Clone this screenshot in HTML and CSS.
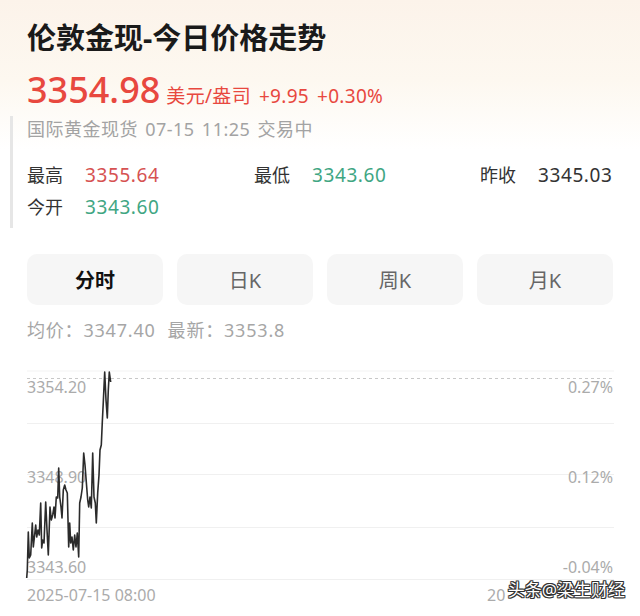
FILE: index.html
```html
<!DOCTYPE html>
<html lang="zh-CN">
<head>
    <meta charset="UTF-8">
    <meta name="viewport" content="width=device-width, initial-scale=1.0">
    <title>伦敦金现-今日价格走势</title>
    <link rel="stylesheet" href="styles.css">
</head>
<body>
    <div class="header">
        <h1 class="title">伦敦金现-今日价格走势</h1>
        <div class="price-row">
            <span class="price">3354.98</span>
            <span class="unit">美元/盎司</span>
            <span class="change">+9.95</span>
            <span class="change">+0.30%</span>
        </div>
    </div>

    <div class="info">
        <div class="subtitle">国际黄金现货 07-15 11:25 交易中</div>
        <div class="stats">
            <div class="stat"><span class="label">最高</span><span class="value up">3355.64</span></div>
            <div class="stat"><span class="label">最低</span><span class="value down">3343.60</span></div>
            <div class="stat"><span class="label">昨收</span><span class="value">3345.03</span></div>
            <div class="stat"><span class="label">今开</span><span class="value down">3343.60</span></div>
        </div>
    </div>

    <div class="tabs">
        <button class="tab active">分时</button>
        <button class="tab">日K</button>
        <button class="tab">周K</button>
        <button class="tab">月K</button>
    </div>

    <div class="summary">
        <span>均价：3347.40</span>
        <span>最新：3353.8</span>
    </div>

    <div class="chart">
        <svg width="640" height="256" viewBox="0 360 640 256">
            <!-- grid -->
            <line x1="27" y1="371" x2="614" y2="371" stroke="#f3f3f3" stroke-width="1"/>
            <line x1="27" y1="378.5" x2="614" y2="378.5" stroke="#c8c8c8" stroke-width="1" stroke-dasharray="3 3"/>
            <line x1="27" y1="423.5" x2="614" y2="423.5" stroke="#f0f0f0" stroke-width="1"/>
            <line x1="27" y1="474.5" x2="614" y2="474.5" stroke="#f0f0f0" stroke-width="1"/>
            <line x1="27" y1="527.5" x2="614" y2="527.5" stroke="#f0f0f0" stroke-width="1"/>
            <line x1="27" y1="579.5" x2="614" y2="579.5" stroke="#f0f0f0" stroke-width="1"/>

            <g class="axis">
                <text x="27" y="393">3354.20</text>
                <text x="27" y="483">3348.90</text>
                <text x="27" y="573">3343.60</text>
                <text x="613" y="393" text-anchor="end">0.27%</text>
                <text x="613" y="483" text-anchor="end">0.12%</text>
                <text x="613" y="573" text-anchor="end">-0.04%</text>
                <text x="27" y="601">2025-07-15 08:00</text>
                <text x="487" y="601">20</text>
            </g>

            <polyline class="line" points="
                26.7,578 27.3,570 28.3,532 29.3,558 30.7,555 32.3,523 33.3,547 34.3,538
                35.7,525 36.7,537 38,530 39.3,535 40.7,503 41.7,548 42.7,540 44,543
                45.7,502 47,530 48.3,555 50,507 51.3,520 52.7,515 54,507 55,518
                56.3,497 57.7,498 58.7,468 59.7,497 61,507 62,518 63.3,490 64.7,485
                66,490 67.3,493 68.7,547 69.7,523 70.7,543 72,537 73.3,550 74.7,535
                76,547 77.3,533 78.7,557 79.7,503 81,497 82.3,488 83.7,453 85,465
                86.3,482 87.7,500 88.7,507 90,497 91.3,508 92.7,453 94,497 95.3,503
                96.3,523 97.7,493 99,475 100,450 101.3,445 102.3,422 103.3,402 104.7,372
                106,400 107.3,418 108.3,390 109.3,372 110.7,382"/>
        </svg>
        <div class="watermark">头条@梁生财经</div>
    </div>
</body>
</html>
```

FILE: styles.css
```css
body {
    margin: 0;
    font-family: "Noto Sans", "Noto Sans CJK SC", sans-serif;
    color: #333;
    background: linear-gradient(180deg, #fcf3ea 0px, #fdf8f0 80px, #ffffff 150px);
    background-repeat: no-repeat;
    background-color: #fff;
    width: 640px;
    height: 616px;
    overflow: hidden;
}

.header {
    padding: 18px 27px 0;
}

.title {
    margin: 0;
    font-size: 29px;
    line-height: 40px;
    font-weight: 700;
    color: #1a1a1a;
}

.price-row {
    margin-top: 10px;
    height: 44px;
    display: flex;
    align-items: baseline;
    color: #e8483f;
}

.price {
    font-size: 36px;
    line-height: 44px;
    font-weight: 500;
    margin-right: 6px;
}

.unit,
.change {
    font-size: 19px;
    margin-right: 8px;
    letter-spacing: 0.3px;
}

.info {
    margin: 4px 0 0 10px;
    padding: 0 0 5px 14px;
    border-left: 3px solid #e6e6e6;
}

.subtitle {
    font-size: 18px;
    line-height: 26px;
    color: #a3a3a3;
    letter-spacing: 0.5px;
    word-spacing: 2px;
}

.stats {
    margin-top: 17px;
    display: grid;
    grid-template-columns: 227px 226px auto;
}

.stat {
    display: flex;
    align-items: baseline;
    line-height: 32px;
}

.label {
    width: 58px;
    font-size: 18px;
    color: #333;
}

.value {
    font-size: 19px;
    letter-spacing: 0.6px;
    color: #333;
}

.value.up {
    color: #d65252;
}

.value.down {
    color: #3fa683;
}

.tabs {
    margin-top: 26px;
    padding: 0 27px;
    display: grid;
    grid-template-columns: repeat(4, 1fr);
    gap: 14px;
}

.tab {
    height: 51px;
    border: none;
    border-radius: 10px;
    background-color: #f6f6f6;
    font-family: inherit;
    font-size: 20px;
    color: #666;
    padding: 0;
}

.tab.active {
    color: #111;
    font-weight: 700;
}

.summary {
    margin-top: 12px;
    padding: 0 27px;
    font-size: 18px;
    line-height: 26px;
    color: #a6a6a6;
    letter-spacing: 0.8px;
    display: flex;
    gap: 12px;
}

.chart {
    margin-top: 17px;
    position: relative;
    height: 256px;
}

.chart svg {
    display: block;
}

.axis text {
    font-family: "Noto Sans", sans-serif;
    font-size: 16px;
    fill: #ababab;
}

.line {
    fill: none;
    stroke: #2b2b2b;
    stroke-width: 1.6;
    stroke-linejoin: round;
}

.watermark {
    position: absolute;
    right: 15px;
    bottom: 15px;
    font-size: 17px;
    line-height: 22px;
    color: #fff;
    text-shadow: -1px 0 #333, 1px 0 #333, 0 -1px #333, 0 1px #333,
        -1px -1px #333, 1px 1px #333, -1px 1px #333, 1px -1px #333;
}
```
